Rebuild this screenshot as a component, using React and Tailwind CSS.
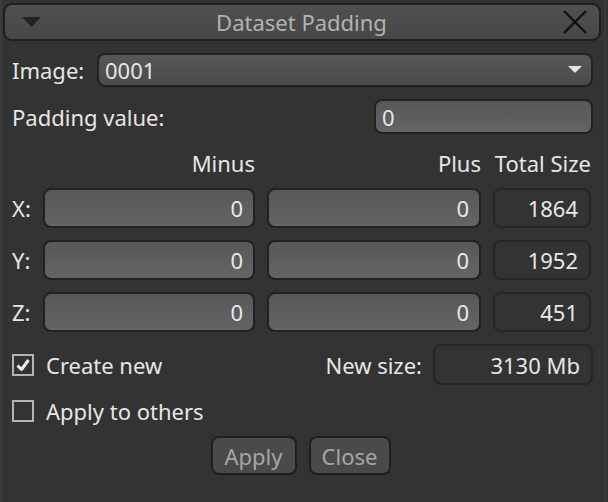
import React from 'react';

const font = { fontFamily: '"Noto Sans", "Open Sans", sans-serif' };

function Field({ value, className = '' }) {
  return (
    <div className={`h-full flex items-center justify-end pr-[10px] rounded-[8px] border-2 border-[#222] bg-gradient-to-b from-[#585858] to-[#646464] text-[#e8e8e8] ${className}`}>
      {value}
    </div>
  );
}

function SizeBox({ value }) {
  return (
    <div className="w-[98px] h-full flex items-center justify-end pr-[11px] rounded-[8px] border-2 border-[#262626] bg-[#333] text-[#e8e8e8]">
      {value}
    </div>
  );
}

function Check({ checked }) {
  return (
    <div className="w-[22px] h-[22px] border-2 border-[#b4b4b4] flex items-center justify-center">
      {checked && (
        <svg width="16" height="16" viewBox="0 0 16 16">
          <path d="M2.5 8.5 L6.5 12.5 L13.5 3" stroke="#f2f2f2" strokeWidth="3" fill="none" strokeLinejoin="round" />
        </svg>
      )}
    </div>
  );
}

function XYZRow({ label, total }) {
  return (
    <div className="flex items-stretch h-[40px] pl-[10px] pr-[15px]">
      <div className="w-[31px] flex items-center">{label}</div>
      <Field value="0" className="w-[212px]" />
      <div className="w-[12px]" />
      <Field value="0" className="w-[214px]" />
      <div className="w-[12px]" />
      <SizeBox value={total} />
    </div>
  );
}

export default function App() {
  return (
    <div style={font} className="w-[608px] h-[502px] bg-[#333] text-[#e6e6e6] text-[22px] leading-none border-l-2 border-[#3c3c3c] relative overflow-hidden">
      <div className="absolute right-[2px] top-0 bottom-0 w-[2px] bg-[#3a3a3a]" />
      {/* title bar */}
      <div className="mt-[3px] ml-[1px] w-[598px] h-[38px] rounded-[9px] border-2 border-[#1f1f1f] bg-gradient-to-b from-[#505050] to-[#474747] flex items-center relative">
        <svg className="ml-[17px]" width="19" height="11" viewBox="0 0 19 11">
          <polygon points="0,0 19,0 9.5,10" fill="#222" />
        </svg>
        <div className="flex-1 text-center text-[22px] text-[#b2b2b2] -mt-[1px]">Dataset Padding</div>
        <svg className="mr-[11px]" width="26" height="24" viewBox="0 0 26 24">
          <path d="M2 1 L24 23 M24 1 L2 23" stroke="#111" strokeWidth="2.4" />
        </svg>
      </div>

      {/* image row */}
      <div className="flex items-center h-[34px] mt-[12px] pl-[10px] pr-[15px]">
        <div className="w-[85px]">Image:</div>
        <div className="flex-1 h-full rounded-[8px] border-2 border-[#222] bg-gradient-to-b from-[#575757] to-[#4b4b4b] flex items-center pl-[6px] pr-[9px]">
          <span className="flex-1">0001</span>
          <svg width="14" height="8" viewBox="0 0 14 8">
            <polygon points="0,0 14,0 7,7" fill="#e4e4e4" />
          </svg>
        </div>
      </div>

      {/* padding value */}
      <div className="flex items-center h-[35px] mt-[12px] pl-[10px] pr-[15px]">
        <div className="flex-1">Padding value:</div>
        <div className="w-[219px] h-full rounded-[8px] border-2 border-[#222] bg-gradient-to-b from-[#585858] to-[#646464] flex items-center pl-[6px]">0</div>
      </div>

      {/* headers */}
      <div className="flex items-center h-[30px] mt-[14px] pl-[10px] pr-[15px]">
        <div className="w-[31px]" />
        <div className="w-[212px] text-right">Minus</div>
        <div className="w-[12px]" />
        <div className="w-[214px] text-right">Plus</div>
        <div className="w-[12px]" />
        <div className="w-[98px] text-right">Total Size</div>
      </div>

      <div className="flex flex-col gap-[12px] mt-[10px]">
        <XYZRow label="X:" total="1864" />
        <XYZRow label="Y:" total="1952" />
        <XYZRow label="Z:" total="451" />
      </div>

      {/* create new */}
      <div className="flex items-center h-[41px] mt-[12px] pl-[10px] pr-[15px]">
        <Check checked />
        <div className="ml-[12px] flex-1">Create new</div>
        <div className="mr-[11px]">New size:</div>
        <div className="w-[160px] h-full flex items-center justify-end pr-[11px] rounded-[8px] border-2 border-[#262626] bg-[#333]">3130 Mb</div>
      </div>

      {/* apply to others */}
      <div className="flex items-center h-[30px] mt-[11px] pl-[10px]">
        <Check />
        <div className="ml-[12px]">Apply to others</div>
      </div>

      {/* buttons */}
      <div className="flex justify-center gap-[12px] mt-[10px] pr-[9px]">
        <div className="w-[86px] h-[39px] rounded-[8px] border-2 border-[#1f1f1f] bg-[#4a4a4a] flex items-center justify-center text-[#a6a6a6]">Apply</div>
        <div className="w-[82px] h-[39px] rounded-[8px] border-2 border-[#1f1f1f] bg-[#4a4a4a] flex items-center justify-center text-[#a6a6a6]">Close</div>
      </div>
    </div>
  );
}
